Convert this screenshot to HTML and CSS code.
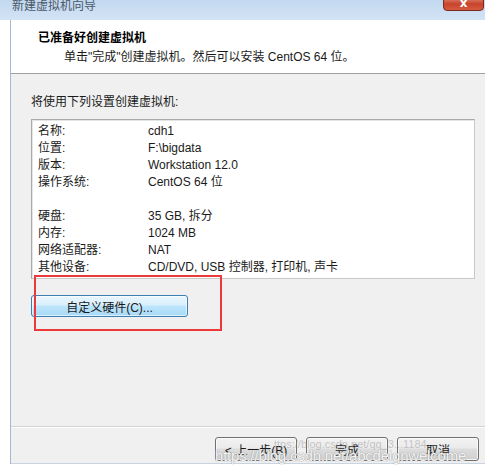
FILE: index.html
```html
<!DOCTYPE html>
<html lang="zh-CN">
<head>
<meta charset="utf-8">
<title>新建虚拟机向导</title>
<link rel="stylesheet" href="styles.css">
</head>
<body>
<div class="window">
  <div class="titlebar">
    <span class="title">新建虚拟机向导</span>
    <div class="close"><span>x</span></div>
  </div>
  <div class="frame">
    <div class="header">
      <div class="h-title">已准备好创建虚拟机</div>
      <div class="h-sub">单击"完成"创建虚拟机。然后可以安装 CentOS 64 位。</div>
    </div>
    <div class="content">
      <div class="intro">将使用下列设置创建虚拟机:</div>
      <div class="summary">
        <div class="row"><span class="k">名称:</span><span class="v">cdh1</span></div>
        <div class="row"><span class="k">位置:</span><span class="v">F:\bigdata</span></div>
        <div class="row"><span class="k">版本:</span><span class="v">Workstation 12.0</span></div>
        <div class="row"><span class="k">操作系统:</span><span class="v">CentOS 64 位</span></div>
        <div class="row blank"></div>
        <div class="row"><span class="k">硬盘:</span><span class="v">35 GB, 拆分</span></div>
        <div class="row"><span class="k">内存:</span><span class="v">1024 MB</span></div>
        <div class="row"><span class="k">网络适配器:</span><span class="v">NAT</span></div>
        <div class="row"><span class="k">其他设备:</span><span class="v">CD/DVD, USB 控制器, 打印机, 声卡</span></div>
      </div>
      <button class="custom">自定义硬件(C)...</button>
      <div class="highlight"></div>
    </div>
    <div class="footer">
      <button class="btn">&lt; 上一步(B)</button>
      <button class="btn">完成</button>
      <button class="btn">取消</button>
      <div class="wm wm1">ttps://blog.csdn.net/qq_3...1184</div>
      <div class="wm wm2">https://blog.csdn.net/abcdeignwelcome</div>
    </div>
  </div>
</div>
</body>
</html>
```

FILE: styles.css
```css
html, body {
  margin: 0;
  padding: 0;
  background: #ffffff;
}
body {
  width: 497px;
  height: 475px;
  overflow: hidden;
  font-family: "Liberation Sans", "Noto Sans CJK SC", sans-serif;
  font-size: 12px;
  color: #1a1a1a;
}
.window {
  width: 485px;
}
.titlebar {
  position: relative;
  height: 20px;
  background: linear-gradient(#c2d8f0, #d3e3f5);
  display: flex;
  align-items: flex-start;
}
.title {
  padding-left: 12px;
  margin-top: -1px;
  line-height: 15px;
  color: #4a5868;
  font-size: 12px;
}
.close {
  position: absolute;
  left: 443px;
  top: -6px;
  width: 39px;
  height: 15px;
  border: 1px solid #7a2a20;
  border-radius: 0 0 4px 4px;
  background: linear-gradient(#e8a090, #c8442c 60%, #d65a40);
  display: flex;
  justify-content: center;
  align-items: flex-end;
  overflow: hidden;
}
.close span {
  color: #fff;
  font-family: "DejaVu Sans", sans-serif;
  font-weight: bold;
  font-size: 12px;
  line-height: 12px;
  margin-bottom: 1px;
}
.frame {
  margin-left: 10px;
  width: 474px;
  border-left: 1px solid #a6b8cc;
  display: flex;
  flex-direction: column;
}
.header {
  background: #ffffff;
  height: 54px;
  border-bottom: 1px solid #a0a0a0;
  box-sizing: border-box;
  padding-top: 5px;
}
.h-title {
  font-weight: bold;
  margin-left: 27px;
  line-height: 16px;
  margin-top: 5px;
  color: #000;
}
.h-sub {
  margin-left: 53px;
  margin-top: 3px;
  line-height: 16px;
}
.content {
  position: relative;
  background: #f0f0f0;
  height: 353px;
  border-bottom: 1px solid #d2d2d2;
  box-sizing: border-box;
  padding: 20px 0 0 20px;
  display: flex;
  flex-direction: column;
  align-items: flex-start;
}
.intro {
  line-height: 16px;
}
.summary {
  margin-top: 9px;
  width: 444px;
  height: 160px;
  box-sizing: border-box;
  background: #ffffff;
  border: 1px solid #a9a9a9;
  border-right-color: #c8c8c8;
  border-bottom-color: #c8c8c8;
  box-shadow: inset 1px 1px 0 #e4e4e4;
  padding: 3px 0 0 6px;
}
.row {
  display: flex;
  height: 17px;
  line-height: 17px;
}
.k {
  width: 110px;
}
.v {
  color: #1a1a1a;
}
.custom {
  margin-top: 16px;
  width: 157px;
  height: 22px;
  font: inherit;
  color: #1a1a1a;
  border: 1px solid #3c7fb1;
  border-radius: 3px;
  background: linear-gradient(#eaf6fd 0%, #d9f0fc 45%, #bee6fd 50%, #a7d9f5 100%);
  padding: 0;
  box-shadow: inset 0 0 0 1px rgba(255,255,255,0.6);
}
.highlight {
  position: absolute;
  left: 23px;
  top: 201px;
  width: 184px;
  height: 52px;
  border: 2px solid #ec3a3a;
}
.footer {
  position: relative;
  height: 37px;
  background: #f0f0f0;
  border-top: 1px solid #ffffff;
  box-sizing: border-box;
  display: flex;
  justify-content: flex-end;
  align-items: flex-start;
  gap: 9px;
  padding: 9px 6px 0 0;
  border-bottom: 1px solid #c8d4e0;
}
.btn {
  width: 82px;
  height: 24px;
  font: inherit;
  color: #1a1a1a;
  border: 1px solid #707070;
  border-radius: 3px;
  background: linear-gradient(#f2f2f2 0%, #ebebeb 45%, #dddddd 50%, #cfcfcf 100%);
  padding: 0;
  box-shadow: inset 0 0 0 1px rgba(255,255,255,0.7);
}
.wm {
  position: absolute;
  white-space: nowrap;
  font-family: "Liberation Sans", sans-serif;
}
.wm1 {
  left: 263px;
  top: 10px;
  font-size: 11px;
  color: rgba(140,140,140,0.45);
}
.wm2 {
  left: 204px;
  top: 19px;
  font-size: 15px;
  letter-spacing: -0.2px;
  color: rgba(255,255,255,0.9);
  text-shadow: 0 0 1px #9a9a9a, 0 0 1px #9a9a9a;
}
```
